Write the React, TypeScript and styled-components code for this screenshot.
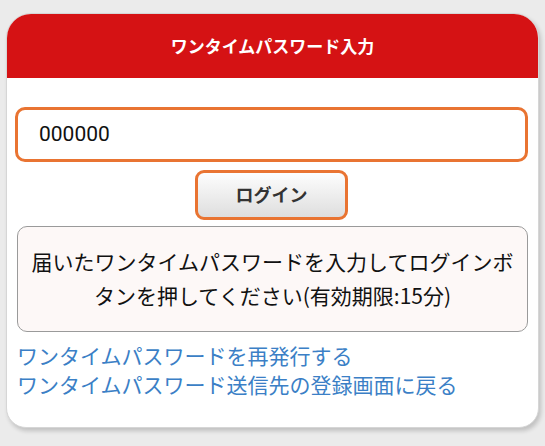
import React from "react";
import styled, { createGlobalStyle } from "styled-components";

const Global = createGlobalStyle`
  html, body { margin: 0; padding: 0; background: #ebebeb; }
  body { font-family: "Noto Sans CJK JP", "Noto Sans", sans-serif; }
  * { box-sizing: border-box; }
`;

const Page = styled.div`
  padding: 13px 6px 0 6px;
  width: 545px;
  height: 446px;
`;

const Card = styled.div`
  width: 533px;
  height: 415px;
  background: #fff;
  border-radius: 25px 25px 20px 20px;
  border: 1px solid #d6d6d6;
  box-shadow: 2px 3px 4px rgba(0, 0, 0, 0.18);
  overflow: hidden;
  display: flex;
  flex-direction: column;
`;

const Header = styled.div`
  height: 64px;
  background: #d51214;
  color: #fff;
  font-weight: 700;
  font-size: 17px;
  display: flex;
  align-items: center;
  justify-content: center;
  padding-bottom: 2px;
`;

const Body = styled.div`
  padding: 29px 10px 0 8px;
  display: flex;
  flex-direction: column;
`;

const CodeInput = styled.input`
  height: 55px;
  width: 100%;
  border: 3px solid #e97432;
  border-radius: 10px;
  padding: 0 0 2px 21px;
  font-family: "Roboto", "Noto Sans", sans-serif;
  font-size: 21px;
  color: #111;
  outline: none;
  background: #fff;
`;

const LoginButton = styled.button`
  align-self: center;
  margin-top: 8px;
  width: 153px;
  height: 50px;
  border: 3px solid #e97432;
  border-radius: 9px;
  background: linear-gradient(#fdfdfd, #dedede);
  font-family: "Noto Sans CJK JP", sans-serif;
  font-weight: 700;
  font-size: 18px;
  color: #333;
  padding: 0 0 2px 0;
`;

const InfoBox = styled.div`
  margin: 6px 0 0 2px;
  height: 106px;
  border: 1px solid #9a9a9a;
  border-radius: 10px;
  background: #fdf8f7;
  display: flex;
  align-items: center;
  justify-content: center;
  text-align: center;
  padding: 0 6px 2px;
  font-size: 21px;
  line-height: 34px;
  color: #111;
`;

const Links = styled.div`
  margin: 9px 0 0 2px;
  display: flex;
  flex-direction: column;
`;

const Link = styled.a`
  font-size: 21px;
  line-height: 29px;
  color: #3b7fc6;
  text-decoration: none;
`;

export default function App() {
  return (
    <>
      <Global />
      <Page>
        <Card>
          <Header>ワンタイムパスワード入力</Header>
          <Body>
            <CodeInput defaultValue="000000" />
            <LoginButton>ログイン</LoginButton>
            <InfoBox>
              届いたワンタイムパスワードを入力してログインボタンを押してください(有効期限:15分)
            </InfoBox>
            <Links>
              <Link href="#">ワンタイムパスワードを再発行する</Link>
              <Link href="#">ワンタイムパスワード送信先の登録画面に戻る</Link>
            </Links>
          </Body>
        </Card>
      </Page>
    </>
  );
}
